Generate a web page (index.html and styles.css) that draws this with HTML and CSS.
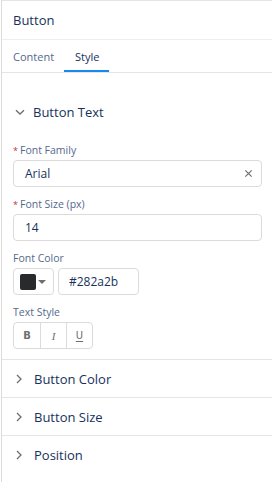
FILE: index.html
```html
<!DOCTYPE html>
<html lang="en">
<head>
  <meta charset="UTF-8">
  <meta name="viewport" content="width=device-width, initial-scale=1.0">
  <title>Button</title>
  <link rel="stylesheet" href="styles.css">
</head>
<body>
  <div class="panel">
    <!-- Cabecera del panel -->
    <div class="panel-header">Button</div>

    <!-- Pestañas -->
    <div class="tabs">
      <span class="tab">Content</span>
      <span class="tab active">Style</span>
    </div>

    <!-- Sección abierta -->
    <div class="section open">
      <div class="section-title">
        <svg class="chevron" viewBox="0 0 10 10" width="10" height="10"><path d="M1 3.2 L5 7 L9 3.2" fill="none" stroke="#706e6b" stroke-width="1.3"/></svg>
        <span>Button Text</span>
      </div>

      <div class="field">
        <label class="label"><abbr class="req">*</abbr>Font Family</label>
        <div class="input">
          <span>Arial</span>
          <svg class="clear" viewBox="0 0 10 10" width="10" height="10"><path d="M1.5 1.5 L8.5 8.5 M8.5 1.5 L1.5 8.5" stroke="#706e6b" stroke-width="1.3"/></svg>
        </div>
      </div>

      <div class="field">
        <label class="label"><abbr class="req">*</abbr>Font Size (px)</label>
        <div class="input"><span>14</span></div>
      </div>

      <div class="field">
        <label class="label">Font Color</label>
        <div class="color-row">
          <div class="swatch-btn">
            <span class="swatch"></span>
            <span class="caret"></span>
          </div>
          <div class="input hex"><span>#282a2b</span></div>
        </div>
      </div>

      <div class="field">
        <label class="label">Text Style</label>
        <div class="btn-group">
          <button class="style-btn bold">B</button>
          <button class="style-btn italic">I</button>
          <button class="style-btn underline">U</button>
        </div>
      </div>
    </div>

    <!-- Secciones cerradas -->
    <div class="section closed">
      <div class="section-title">
        <svg class="chevron" viewBox="0 0 10 10" width="10" height="10"><path d="M3 1 L7 5 L3 9" fill="none" stroke="#706e6b" stroke-width="1.3"/></svg>
        <span>Button Color</span>
      </div>
    </div>
    <div class="section closed">
      <div class="section-title">
        <svg class="chevron" viewBox="0 0 10 10" width="10" height="10"><path d="M3 1 L7 5 L3 9" fill="none" stroke="#706e6b" stroke-width="1.3"/></svg>
        <span>Button Size</span>
      </div>
    </div>
    <div class="section closed last">
      <div class="section-title">
        <svg class="chevron" viewBox="0 0 10 10" width="10" height="10"><path d="M3 1 L7 5 L3 9" fill="none" stroke="#706e6b" stroke-width="1.3"/></svg>
        <span>Position</span>
      </div>
    </div>
  </div>
</body>
</html>
```

FILE: styles.css
```css
body {
  font-family: "Open Sans", Arial, sans-serif;
  margin: 0;
  padding: 0;
  background-color: #fff;
  color: #16325c;
}
/* Panel con borde a la izquierda */
.panel {
  margin-left: 1px;
  border-left: 1px solid #dddbda;
  border-top: 1px solid #e5e5e5;
  min-height: 481px;
}
/* Cabecera */
.panel-header {
  height: 38px;
  padding: 0 11px;
  display: flex;
  align-items: center;
  font-size: 13px;
  border-bottom: 1px solid #eeeeee;
}
/* Pestañas */
.tabs {
  display: flex;
  height: 32px;
  padding-left: 11px;
  border-bottom: 1px solid #e5e5e5;
}
.tab {
  display: flex;
  align-items: center;
  font-size: 11px;
  color: #54698d;
  padding-top: 1px;
}
.tab.active {
  margin-left: 10px;
  padding: 1px 10px 0 11px;
  color: #16325c;
  box-shadow: inset 0 -2px 0 #1589ee;
}
/* Secciones */
.section {
  border-bottom: 1px solid #e5e5e5;
}
.section.last {
  border-bottom: none;
}
.section.open {
  padding: 19px 10px 10px 11px;
}
.section-title {
  display: flex;
  align-items: center;
  font-size: 13px;
  height: 40px;
  color: #16325c;
}
.section.closed .section-title {
  height: 37px;
  padding-left: 12px;
}
.chevron {
  margin-right: 10px;
  flex-shrink: 0;
}
.section.open .chevron {
  margin-left: 2px;
  margin-right: 8px;
}
/* Campos */
.field {
  margin-top: 7px;
}
.section-title + .field {
  margin-top: 8px;
}
.label {
  display: block;
  height: 20px;
  line-height: 20px;
  font-size: 10.5px;
  color: #54698d;
}
.req {
  color: #c23934;
  text-decoration: none;
  margin-right: 2px;
  font-size: 9px;
}
.input {
  height: 27px;
  box-sizing: border-box;
  border: 1px solid #dddbda;
  border-radius: 4px;
  display: flex;
  align-items: center;
  justify-content: space-between;
  padding: 0 8px 0 11px;
  font-size: 12px;
  color: #16325c;
}
.clear {
  width: 9px;
  height: 9px;
}
/* Selector de color */
.color-row {
  display: flex;
  gap: 4px;
}
.swatch-btn {
  width: 41px;
  height: 27px;
  box-sizing: border-box;
  border: 1px solid #dddbda;
  border-radius: 4px;
  display: flex;
  align-items: center;
  padding-left: 6px;
}
.swatch {
  width: 16px;
  height: 16px;
  border-radius: 2px;
  background-color: #282a2b;
}
.caret {
  margin-left: 2px;
  width: 0;
  height: 0;
  border-left: 4px solid transparent;
  border-right: 4px solid transparent;
  border-top: 4px solid #706e6b;
}
.input.hex {
  width: 81px;
  padding-left: 10px;
}
/* Grupo de botones de estilo */
.btn-group {
  display: inline-flex;
  border: 1px solid #dddbda;
  border-radius: 4px;
  height: 27px;
  box-sizing: border-box;
}
.style-btn {
  width: 26px;
  border: none;
  background: none;
  padding: 0;
  font-size: 10px;
  color: #706e6b;
  border-left: 1px solid #dddbda;
}
.style-btn:first-child {
  border-left: none;
}
.style-btn.bold {
  font-family: "DejaVu Sans", sans-serif;
  font-weight: bold;
}
.style-btn.italic {
  font-family: "Liberation Serif", serif;
  font-style: italic;
  font-size: 11px;
}
.style-btn.underline {
  font-family: "DejaVu Sans", sans-serif;
  text-decoration: underline;
  text-underline-offset: 2px;
}
```
